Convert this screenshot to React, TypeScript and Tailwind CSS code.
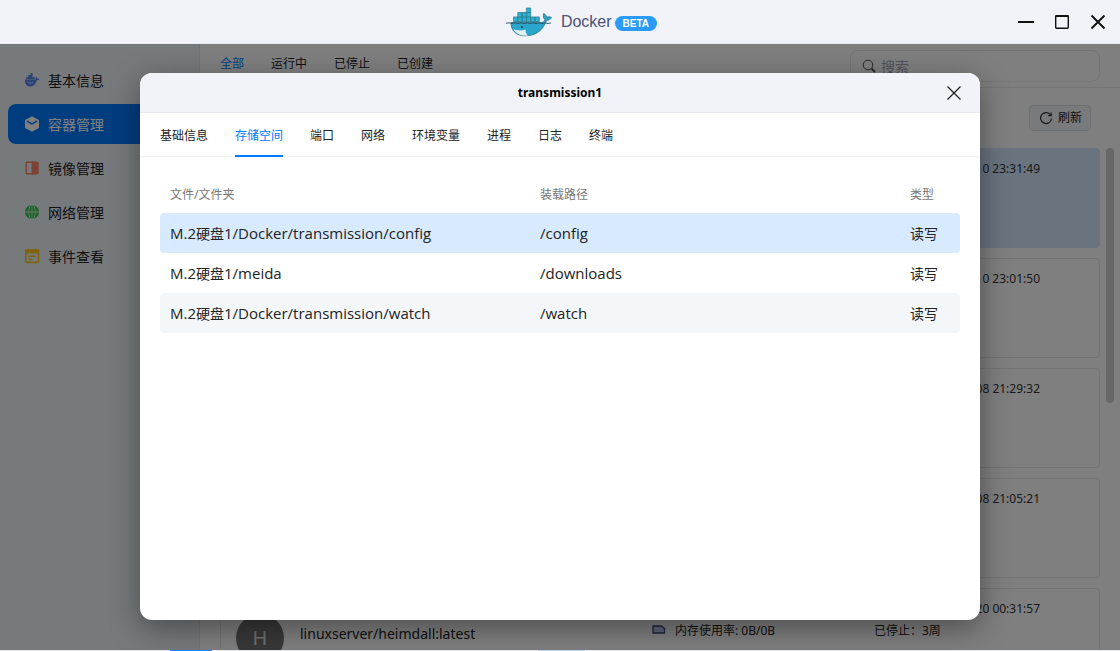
import React from "react";

const navItems = [
  { label: "基本信息", icon: "whale" },
  { label: "容器管理", icon: "box" },
  { label: "镜像管理", icon: "image" },
  { label: "网络管理", icon: "globe" },
  { label: "事件查看", icon: "event" },
];
const filters = ["全部", "运行中", "已停止", "已创建"];
const tabs = ["基础信息", "存储空间", "端口", "网络", "环境变量", "进程", "日志", "终端"];
const containers = ["0 23:31:49", "0 23:01:50", "08 21:29:32", "08 21:05:21", "20 00:31:57"];
const volumes = [
  { disk: "硬盘", rest: "1/Docker/transmission/config", mount: "/config" },
  { disk: "硬盘", rest: "1/meida", mount: "/downloads" },
  { disk: "硬盘", rest: "1/Docker/transmission/watch", mount: "/watch" },
];

function NavIcon({ name }: { name: string }) {
  if (name === "whale")
    return (
      <svg viewBox="0 0 16 16" className="size-4" fill="#5b84ea" aria-hidden="true">
        <path d="M1 7.6h10.400c.5-.7.4-1.700 0-2.500l.5-.5c.9.5 1.300 1.200 1.300 1.900.8-.2 1.600 0 2.300.5-.6.9-1.500 1.200-2.700 1.200C11.700 12.400 9.300 14.600 6 14.600 2.500 14.600.900 12 1 7.600z" />
        <path d="M2 5.200h8.700v2H2zM4.300 3h4.300v2.200H4.300zM6.600 1h2v2h-2z" />
        <path d="M3.500 10.300c1.500.8 3.500.9 6-.2" stroke="#dbe5ff" strokeWidth=".8" fill="none" />
      </svg>
    );
  if (name === "box")
    return (
      <svg viewBox="0 0 16 16" className="size-4" aria-hidden="true">
        <path d="M8 .8l6.500 3.400v7.600L8 15.200l-6.500-3.400V4.200z" fill="#fff" stroke="#fff" strokeLinejoin="round" />
        <path d="M3.300 5.300L8 7.800l4.700-2.500" fill="none" stroke="#007aff" strokeWidth="1.500" strokeLinecap="round" />
      </svg>
    );
  if (name === "image")
    return (
      <svg viewBox="0 0 16 16" className="size-4" aria-hidden="true">
        <rect x="2.200" y="2.200" width="11.800" height="11.600" rx="1" fill="none" stroke="#fa8468" strokeWidth="1.500" />
        <path d="M8 2h5.200c.6 0 1 .4 1 1v10c0 .6-.4 1-1 1H8z" fill="#fa8468" />
        <path d="M8.300 1v14" stroke="#fa8468" strokeWidth="1.500" />
      </svg>
    );
  if (name === "globe")
    return (
      <svg viewBox="0 0 16 16" className="size-4" aria-hidden="true">
        <circle cx="8" cy="8" r="7" fill="#2fc748" />
        <g fill="none" stroke="#e9edf2" strokeWidth=".9">
          <ellipse cx="8" cy="8" rx="3.300" ry="7.500" />
          <path d="M.5 8h15M8 .5v15" />
        </g>
      </svg>
    );
  return (
    <svg viewBox="0 0 16 16" className="size-4" aria-hidden="true">
      <rect x="1.800" y="1.800" width="12.600" height="12.600" rx="1" fill="none" stroke="#fcc419" strokeWidth="1.600" />
      <path d="M1 1.500h14v4H1z" fill="#fcc419" />
      <path d="M4.500 8.300h7M4.500 11.200h4" stroke="#fcc419" strokeWidth="1.500" />
    </svg>
  );
}

function DockerLogo() {
  return (
    <svg viewBox="0 0 48 30" className="h-[30px] w-12" aria-hidden="true">
      <g fill="#2fb2d6" stroke="#2b7f96" strokeWidth=".8">
        <path d="M8.500 10h4.300v4.500H8.500zM12.800 10h4.300v4.500h-4.300zM17.100 10h4.300v4.500h-4.300zM21.400 10h4.300v4.500h-4.300zM25.700 10H30v4.500h-4.300zM30 10h4.300v4.500H30z" />
        <path d="M12.800 5.500h4.300V10h-4.300zM17.100 5.500h4.300V10h-4.300zM21.400 5.500h4.300V10h-4.300z" />
        <path d="M21.400 1h4.300v4.500h-4.300z" />
      </g>
      <path
        d="M6 15.500h29.500c2.600 0 4-1 4.500-2.800-1.700-1.700-2.200-3.900-1.300-6.300 1.700.9 2.700 2.200 2.900 3.800 1.600-.6 3.400-.6 4.900.3-.8 1.900-2.700 2.800-5 2.900C38.500 22.500 31.500 28.800 20 28.800 11 28.800 6 23.500 6 15.500z"
        fill="#2aa5cc"
        stroke="#2a7288"
        strokeWidth=".8"
      />
      <path d="M8.300 22.300c4 1.500 8.500 1.500 12.500.2-.8 3 .5 5 2.700 6-7 .8-12.500-1.500-15.200-6.200z" fill="#e3eff1" />
      <path d="M1 16.300l3-.5 3 .7 3-.7 3 .7 3-.7 3 .7 3-.7 3 .7 3-.7 3 .7 3-.7 3 .7 3-.7 3 .7 3-.7" stroke="#25515e" strokeWidth=".9" fill="none" />
      <circle cx="17" cy="20" r=".9" fill="#173f4b" />
    </svg>
  );
}

export default function App() {
  return (
    <div className="flex h-screen flex-col overflow-hidden bg-white font-['Noto_Sans','Noto_Sans_CJK_SC',sans-serif] text-[#222]">
      <header className="grid h-11 shrink-0 grid-cols-[1fr_auto_1fr] items-center border-b border-[#e8eaf2] bg-[#f1f3f9]">
        <span />
        <h1 className="flex items-center gap-2 pl-[42px] font-['Liberation_Sans',sans-serif] text-[16px] text-[#4b5273]">
          <DockerLogo />
          <span className="flex items-center gap-[3px]">
            Docker
            <span className="mt-1 rounded-full bg-[#2b9bfb] px-2 text-[10px] leading-[15px] font-bold text-white">BETA</span>
          </span>
        </h1>
        <div className="flex items-center justify-end gap-5 pr-3.5 text-[#111]">
          <button type="button" aria-label="最小化">
            <svg viewBox="0 0 16 16" className="size-4" fill="none" stroke="currentColor" strokeWidth="2"><path d="M0 8h16" /></svg>
          </button>
          <button type="button" aria-label="最大化">
            <svg viewBox="0 0 16 16" className="size-4" fill="none" stroke="currentColor">
              <rect x="1.700" y="1.700" width="12.600" height="12.600" rx="1" strokeWidth="1.400" />
              <path d="M1.500 2h13" strokeWidth="2" />
            </svg>
          </button>
          <button type="button" aria-label="关闭">
            <svg viewBox="0 0 16 16" className="size-4" fill="none" stroke="currentColor" strokeWidth="1.900"><path d="M1.500 1.500l13 13M14.500 1.500l-13 13" /></svg>
          </button>
        </div>
      </header>

      <div className="relative flex min-h-0 flex-1 overflow-hidden">
        <nav className="flex w-[200px] shrink-0 flex-col gap-1 border-r border-[#e4e6ea] bg-[#eff4f9] px-2 pt-4">
          {navItems.map((item, i) => (
            <a
              key={item.label}
              href="#"
              className={
                "flex h-10 shrink-0 items-center gap-2 rounded-lg pl-4 text-[14px] " +
                (i === 1 ? "bg-[#007aff] text-white" : "text-[#222]")
              }
            >
              <NavIcon name={item.icon} />
              {item.label}
            </a>
          ))}
        </nav>

        <main className="flex min-w-0 flex-1 flex-col">
          <div className="flex h-11 shrink-0 items-start justify-between border-b border-[#e8e8e8] pt-1.5 pr-5 pl-5">
            <div className="flex gap-[27px] pt-1.5 text-[12px] leading-4">
              {filters.map((f, i) => (
                <button key={f} type="button" className={i === 0 ? "text-[#007aff]" : ""}>{f}</button>
              ))}
            </div>
            <label className="flex h-8 w-[250px] items-center gap-1 rounded-lg border border-[#e9e9ee] pl-2.5">
              <svg viewBox="0 0 16 16" className="size-4" fill="none" stroke="#555" aria-hidden="true">
                <circle cx="7" cy="7" r="4.800" /><path d="M10.500 10.500l3.500 3.500" strokeWidth="1.800" />
              </svg>
              <input aria-label="搜索" placeholder="搜索" className="min-w-0 flex-1 bg-transparent text-[14px] outline-none placeholder:text-[#a2a6b0]" />
            </label>
          </div>
          <div className="flex h-[60px] shrink-0 items-center justify-end pr-[29px]">
            <button type="button" className="flex h-[26px] items-center gap-1 rounded border border-[#d9dde3] bg-[#f0f4f8] px-2 text-[12px]">
              <svg viewBox="0 0 16 16" className="size-4" fill="none" stroke="#333" strokeWidth="1.200" aria-hidden="true">
                <path d="M12.600 5A5.500 5.500 0 1 0 13.500 8.500" /><path d="M13.200 2.600v3h-3" />
              </svg>
              刷新
            </button>
          </div>
          <div className="flex min-h-0 flex-1 items-start gap-1.5 overflow-hidden pr-1.5 pl-5">
            <ul className="flex min-w-0 flex-1 flex-col gap-2.5">
              {containers.map((time, i) => (
                <li
                  key={time}
                  className={
                    "h-[100px] shrink-0 rounded border pt-[11px] pr-[59px] pl-[15px] text-[12px] " +
                    (i === 0 ? "border-[#d3e8fe] bg-[#d3e8fe]" : "border-[#e8e8e8]")
                  }
                >
                  <div className="text-right leading-[18px] text-[#333]">{time}</div>
                  {i === 4 && (
                    <div className="grid grid-cols-[415px_223px_auto] leading-5">
                      <div className="flex items-start gap-4">
                        <span className="-mt-1 flex size-12 items-center justify-center rounded-full bg-[#707070] text-[20px] text-[#e2e2e2]">H</span>
                        <span className="pt-1.5 text-[14px] leading-5">linuxserver/heimdall:latest</span>
                      </div>
                      <div className="flex items-start gap-2 pt-[3px]">
                        <svg viewBox="0 0 16 20" className="h-5 w-4" aria-hidden="true">
                          <path d="M2 5h8.500l3 2.500V12H2z" fill="#b9c7e8" stroke="#3d4a78" strokeWidth="1.300" />
                        </svg>
                        内存使用率: 0B/0B
                      </div>
                      <div className="pt-[3px]">已停止：3周</div>
                    </div>
                  )}
                </li>
              ))}
            </ul>
            <div className="h-[255px] w-2 rounded-full bg-[#cfcfcf]" />
          </div>
        </main>

        <div className="absolute inset-0 flex bg-black/50 px-[12.5%] pt-[29px] pb-[30px]">
          <section
            role="dialog"
            aria-labelledby="dialog-title"
            className="flex flex-1 flex-col overflow-hidden rounded-xl bg-white shadow-[0_8px_30px_rgba(0,0,0,0.4)]"
          >
            <div className="grid h-10 shrink-0 grid-cols-[1fr_auto_1fr] items-center border-b border-[#e8eaf2] bg-[#f1f3f9] px-[18px]">
              <span />
              <h2 id="dialog-title" className="text-[12px] font-bold text-black">transmission1</h2>
              <button type="button" aria-label="关闭对话框" className="justify-self-end">
                <svg viewBox="0 0 16 16" className="size-4" fill="none" stroke="#222" strokeWidth="1.300"><path d="M1.500 1.500l13 13M14.500 1.500l-13 13" /></svg>
              </button>
            </div>
            <div role="tablist" className="flex h-11 shrink-0 gap-[27px] border-b border-[#f0f0f2] px-5 text-[12px]">
              {tabs.map((t, i) => (
                <button
                  key={t}
                  type="button"
                  role="tab"
                  aria-selected={i === 1}
                  className={"-mb-px border-b-2 pt-1 " + (i === 1 ? "border-[#007aff] text-[#007aff]" : "border-transparent")}
                >
                  {t}
                </button>
              ))}
            </div>
            <div className="px-5 pt-4">
              <table className="w-full table-fixed text-left">
                <thead>
                  <tr className="h-10 text-[12px] text-[#777]">
                    <th className="w-[46.25%] pt-1 pl-2.5 font-normal">文件/文件夹</th>
                    <th className="w-[46.25%] pt-1 pl-2.5 font-normal">装载路径</th>
                    <th className="pt-1 pl-2.5 font-normal">类型</th>
                  </tr>
                </thead>
                <tbody className="font-['Open_Sans','Noto_Sans_CJK_SC',sans-serif] text-[15px]">
                  {volumes.map((v, i) => (
                    <tr key={v.mount} className={"h-10 " + (i === 0 ? "bg-[#d8eaff]" : i === 2 ? "bg-[#f3f7fa]" : "bg-white")}>
                      <td className="rounded-l pl-2.5">
                        M.2<span className="text-[14px]">{v.disk}</span>{v.rest}
                      </td>
                      <td className="pl-2.5">{v.mount}</td>
                      <td className="rounded-r pl-2.5 text-[14px]">读写</td>
                    </tr>
                  ))}
                </tbody>
              </table>
            </div>
          </section>
        </div>
      </div>

      <div className="flex h-px shrink-0 bg-[#e4e6ea] pl-[170px]">
        <span className="w-[42px] bg-[#1684fc]" />
        <span className="ml-[326px] w-[47px] bg-[#b5d5ee]" />
      </div>
    </div>
  );
}
